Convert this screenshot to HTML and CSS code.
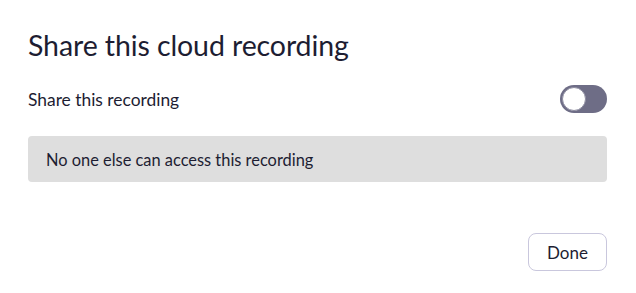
FILE: index.html
```html
<!DOCTYPE html>
<html>
<head>
<meta charset="utf-8">
<link rel="stylesheet" href="styles.css">
</head>
<body>
<div class="dialog">
  <h1 class="title">Share this cloud recording</h1>
  <div class="row">
    <span class="label">Share this recording</span>
    <span class="toggle"><span class="knob"></span></span>
  </div>
  <div class="notice">No one else can access this recording</div>
  <div class="footer">
    <button class="done">Done</button>
  </div>
</div>
</body>
</html>
```

FILE: styles.css
```css
html, body {
  margin: 0;
  padding: 0;
  background: #ffffff;
}
body {
  font-family: Lato, "Open Sans", sans-serif;
  color: #1d1d32;
}
.dialog {
  padding: 25px 29px 0 28px;
  display: flex;
  flex-direction: column;
}
.title {
  margin: 0;
  font-size: 28.5px;
  font-weight: 400;
  line-height: 40px;
  letter-spacing: -0.1px;
}
.row {
  display: flex;
  justify-content: space-between;
  align-items: center;
  margin-top: 20px;
  height: 28px;
}
.label {
  font-size: 17.4px;
}
.toggle {
  width: 47px;
  height: 28px;
  border-radius: 14px;
  background: #6e6d86;
  display: flex;
  align-items: center;
  padding: 0 2px;
  box-sizing: border-box;
}
.knob {
  width: 24px;
  height: 24px;
  border-radius: 50%;
  background: #ffffff;
  box-sizing: border-box;
  border: 1px solid #8d8ca0;
}
.notice {
  margin-top: 23px;
  height: 46px;
  background: #dedede;
  border-radius: 4px;
  display: flex;
  align-items: center;
  padding-left: 18px;
  font-size: 16.4px;
}
.footer {
  display: flex;
  justify-content: flex-end;
  margin-top: 51px;
}
.done {
  width: 79px;
  height: 38px;
  border: 1px solid #c9c7dd;
  border-radius: 8px;
  background: #ffffff;
  font-family: Lato, "Open Sans", sans-serif;
  font-size: 17px;
  color: #1d1d32;
  padding: 0;
}
```
